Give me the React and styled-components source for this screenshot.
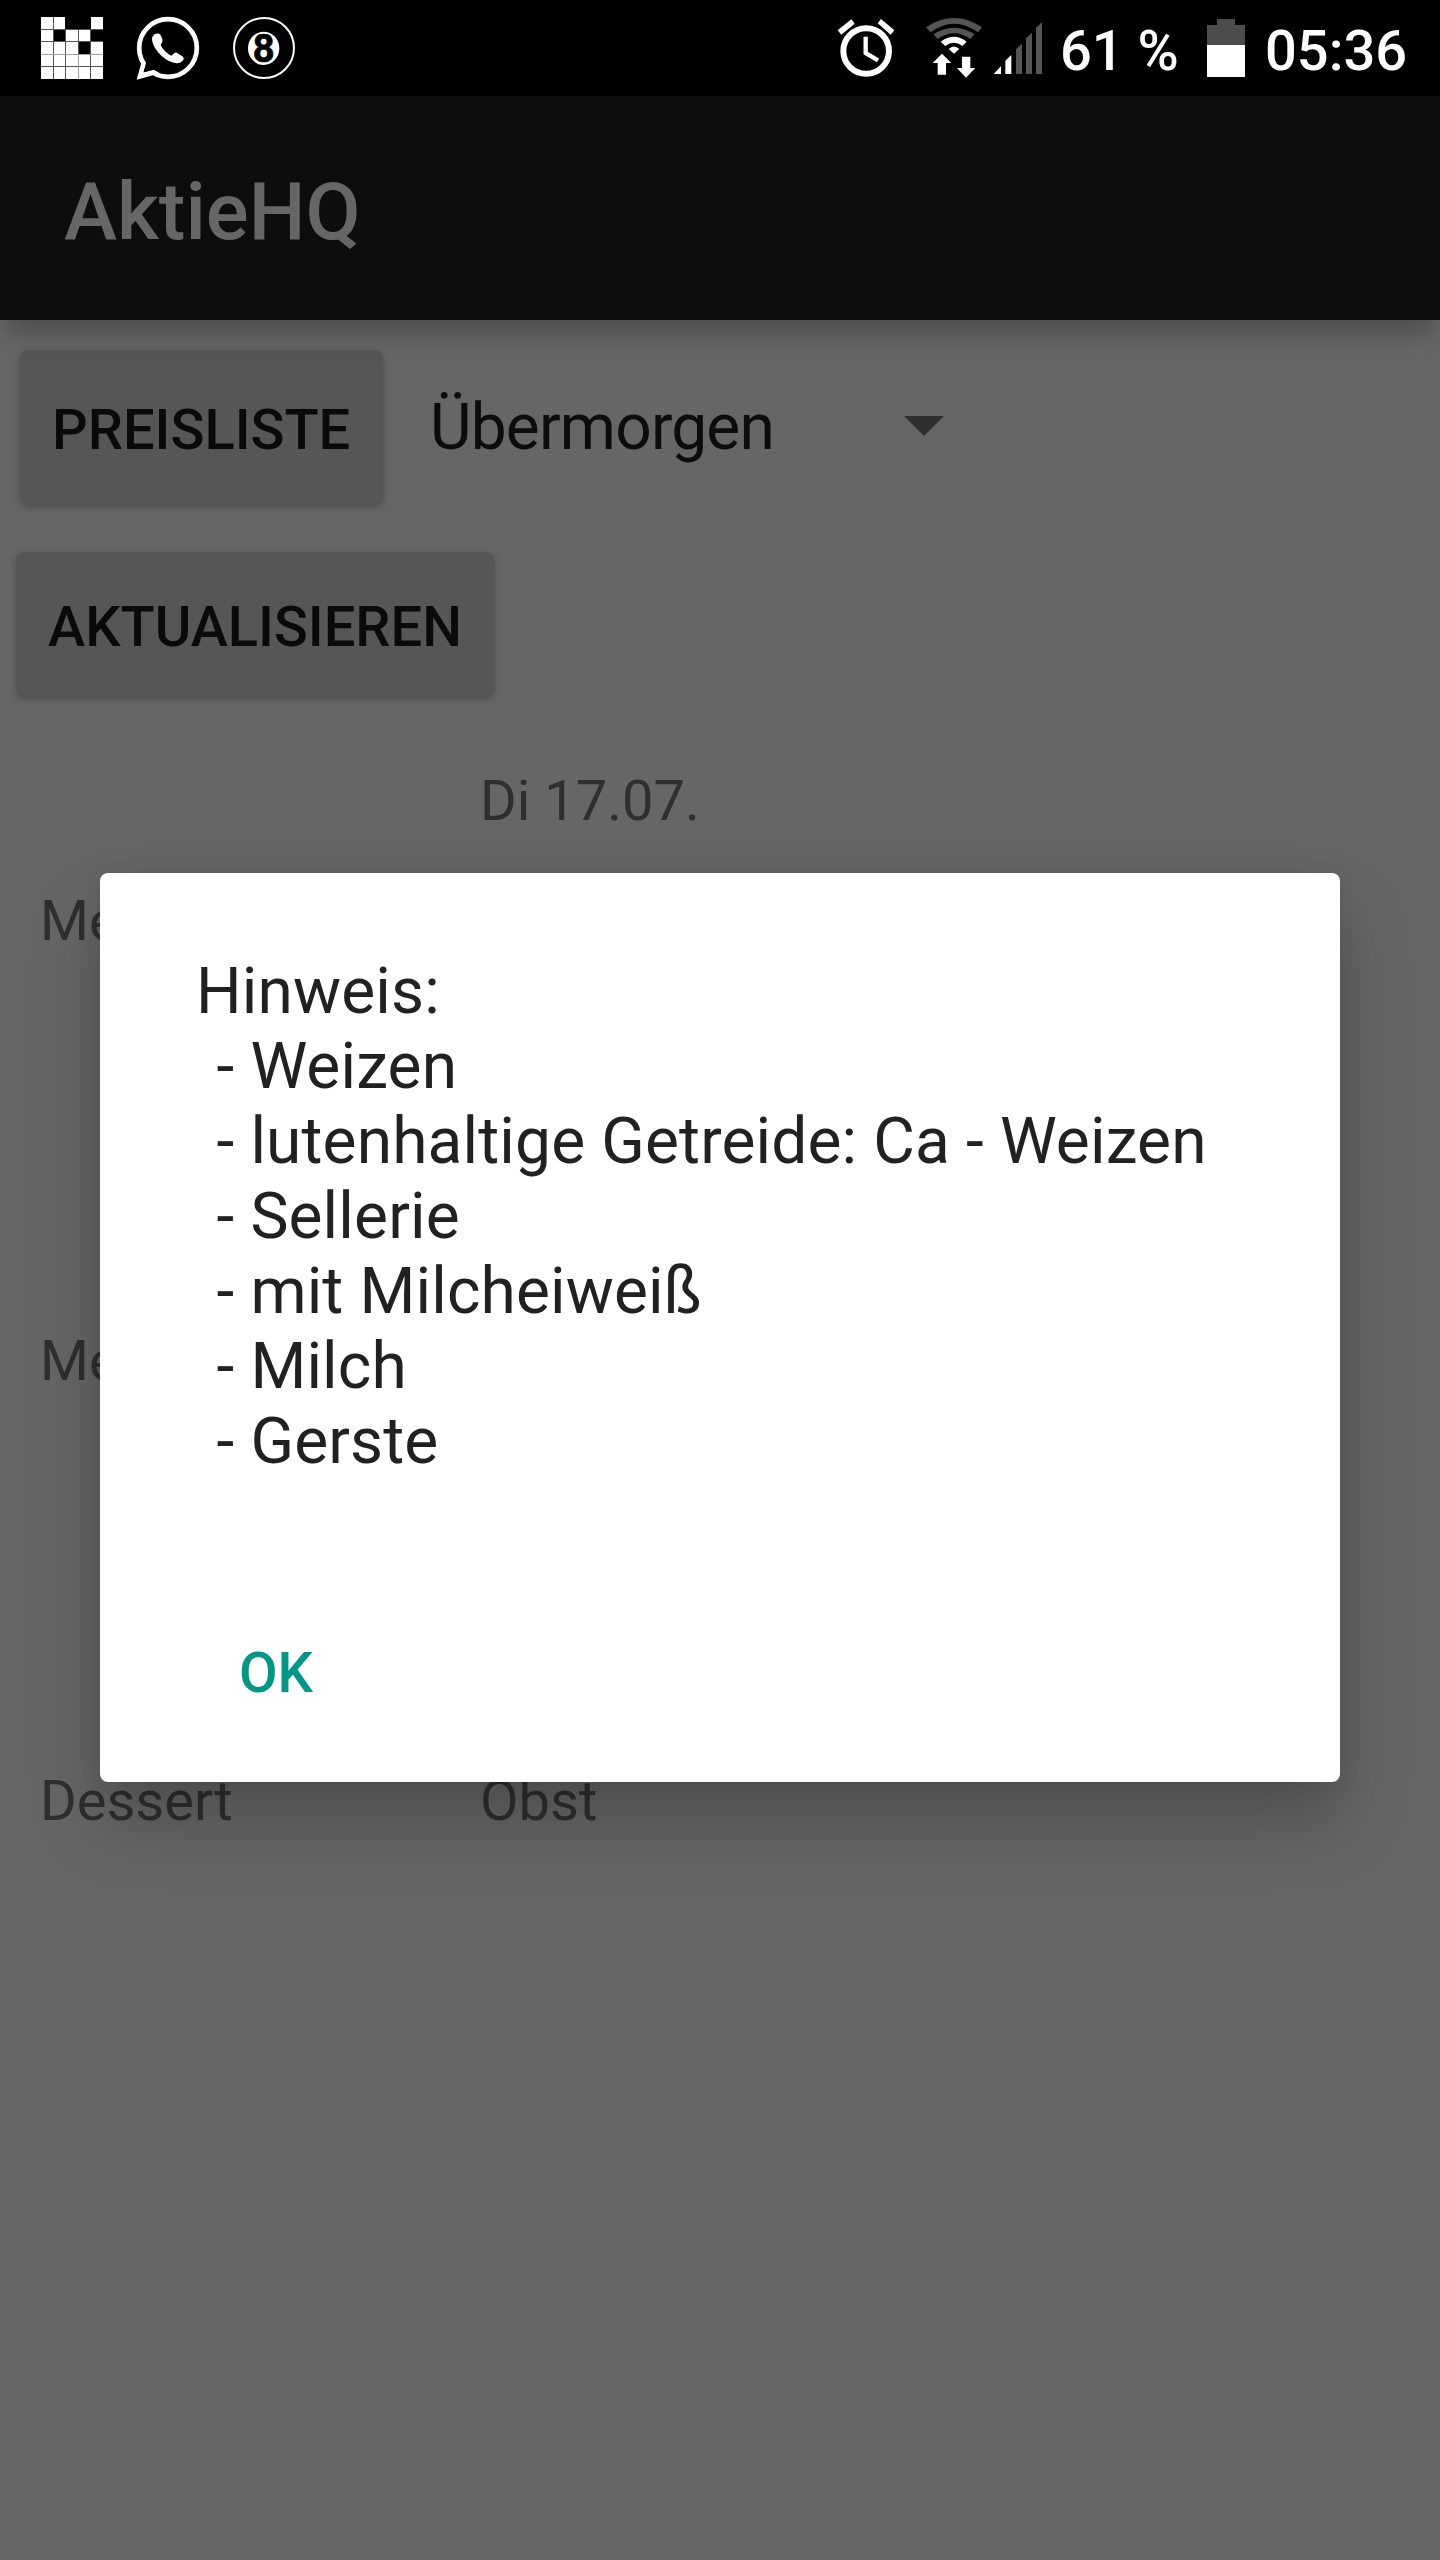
import React from "react";
import styled, { createGlobalStyle } from "styled-components";

const GlobalStyle = createGlobalStyle`
  * { box-sizing: border-box; }
  body { margin: 0; background: #666666; }
`;

const Screen = styled.div`
  position: relative;
  display: flex;
  flex-direction: column;
  width: 1440px;
  height: 2560px;
  overflow: hidden;
  background: #666666;
  font-family: Roboto, "Noto Sans", sans-serif;
  font-size: 56px;
  line-height: 66px;
  color: #0c0c0c;
`;

const StatusBar = styled.header`
  display: flex;
  justify-content: space-between;
  flex: none;
  height: 96px;
  padding: 0 33px 0 41px;
  background: #000000;
  color: #ffffff;
  font-weight: 500;
`;

const StatusGroup = styled.div`
  display: flex;
  align-items: flex-start;
`;

const Glyph = styled.svg`
  display: block;
  flex: none;
  width: ${(p) => p.$w}px;
  height: ${(p) => p.$h}px;
  margin-top: ${(p) => p.$top}px;
  margin-right: ${(p) => p.$gap || 0}px;
`;

const StatusText = styled.span`
  margin-top: 18px;
  width: ${(p) => p.$w}px;
  margin-right: ${(p) => p.$gap || 0}px;
  white-space: nowrap;
`;

const AppBar = styled.div`
  position: relative;
  z-index: 1;
  display: flex;
  flex: none;
  height: 224px;
  padding: 69px 64px 0;
  background: #0d0d0d;
  box-shadow: 0 18px 25px -6px rgba(0, 0, 0, 0.25);
`;

const Title = styled.h1`
  margin: 0;
  color: #666666;
  font-size: 80px;
  font-weight: 500;
  line-height: 94px;
`;

const Toolbar = styled.div`
  display: flex;
  align-items: flex-start;
  flex: none;
  height: ${(p) => p.$height}px;
  padding: ${(p) => p.$pad};
`;

const RaisedButton = styled.button`
  display: flex;
  align-items: flex-start;
  width: ${(p) => p.$w}px;
  height: ${(p) => p.$h}px;
  padding: ${(p) => p.$top}px 0 0 32px;
  border: 0;
  border-radius: 8px;
  background: #565656;
  box-shadow: 0 3px 7px rgba(0, 0, 0, 0.25);
  color: #0a0a0a;
  font: 500 56px/66px Roboto, "Noto Sans", sans-serif;
  text-transform: uppercase;
  white-space: nowrap;
`;

const Select = styled.div`
  display: flex;
  align-items: flex-start;
  justify-content: space-between;
  width: 514px;
  margin: 40px 0 0 47px;
  font-size: 64px;
  line-height: 75px;
  letter-spacing: -0.8px;
`;

const Caret = styled.span`
  width: 40px;
  height: 20px;
  margin-top: 26px;
  background: #2f2f2f;
  clip-path: polygon(0 0, 100% 0, 50% 100%);
`;

const MenuGrid = styled.div`
  display: grid;
  grid-template-columns: 440px 1fr;
  grid-template-rows: 120px 440px 440px 120px;
  padding: 32px 40px 0;
  color: #2f2f2f;
`;

const Overlay = styled.div`
  position: absolute;
  inset: 96px 0 0;
  z-index: 2;
  display: flex;
  justify-content: center;
  align-items: flex-start;
  padding-top: 777px;
`;

const Dialog = styled.section`
  display: flex;
  flex-direction: column;
  align-items: flex-start;
  width: 1240px;
  height: 909px;
  padding: 81px 96px 0;
  border-radius: 8px;
  background: #ffffff;
  box-shadow: 0 40px 72px rgba(0, 0, 0, 0.24), 0 0 24px rgba(0, 0, 0, 0.07);
`;

const MessageLine = styled.p`
  margin: 0;
  padding-left: ${(p) => (p.$item ? 4.5 : 0)}px;
  color: #212121;
  font-size: 64px;
  line-height: 75px;
  letter-spacing: 0.15px;
  white-space: pre;
`;

const TextButton = styled.button`
  margin: 161px 0 0 43px;
  padding: 0;
  border: 0;
  background: none;
  color: #009688;
  font: 500 56px/66px Roboto, "Noto Sans", sans-serif;
`;

const tiles = ["11001", "10110", "11101", "11111", "11111"];
const tileStart = [0, 13, 25, 38, 50];
const tileSize = [12, 11, 12, 11, 12];

function TilesIcon() {
  return (
    <Glyph $w={62} $h={62} $top={17} $gap={33} viewBox="0 0 62 62" shapeRendering="crispEdges">
      <path d="M0 0H24V12H62V62H0Z" fill="#555" />
      <path d="M0 37H62V38H0ZM37 38H38V62H37Z" fill="#a0a0a0" />
      {tiles.map((row, y) =>
        [...row].map((on, x) => (
          <rect
            key={`${x}-${y}`}
            x={tileStart[x]}
            y={tileStart[y]}
            width={tileSize[x]}
            height={tileSize[y]}
            fill={on === "1" ? "#fff" : "#000"}
          />
        ))
      )}
    </Glyph>
  );
}

function ChatIcon() {
  return (
    <Glyph $w={64} $h={64} $top={16} $gap={33} viewBox="348 48 192 192">
      <circle cx="444" cy="144" r="86.500" fill="none" stroke="#fff" strokeWidth="14" />
      <path d="M377 187L371 217L402 209L420 220L404 224L350 239L364 188L362 170Z" fill="#fff" />
      <path d="M379 180L378 189L371 217L402 209L412 214L430 190L400 160Z" fill="#000" />
      <path
        d="M404 102Q396 108 396 120Q400 145 425 168Q448 188 470 190Q484 190 491 178Q492 170 486 168L470 158Q465 156 461 161L454 167Q432 156 422 135L427 125Q429 121 426 115L421 104Q417 98 404 102Z"
        fill="#fff"
      />
    </Glyph>
  );
}

function EightBallIcon() {
  return (
    <Glyph $w={62} $h={62} $top={17} viewBox="639 51 186 186">
      <circle cx="732" cy="144" r="90" fill="none" stroke="#fff" strokeWidth="6" />
      <ellipse cx="731" cy="145" rx="47" ry="50" fill="#fff" />
      <text
        x="731"
        y="186"
        fontSize="114"
        fontWeight="700"
        textAnchor="middle"
        fontFamily="Roboto, sans-serif"
        fill="#000"
        stroke="#000"
        strokeWidth="2"
      >
        8
      </text>
    </Glyph>
  );
}

function AlarmIcon() {
  return (
    <Glyph $w={58} $h={60} $top={18} $gap={30} viewBox="51 54 174 180">
      <circle cx="138.500" cy="153" r="68.500" fill="none" stroke="#fff" strokeWidth="18" />
      <path d="M137 110V159L174 181" fill="none" stroke="#fff" strokeWidth="13" />
      <path d="M53 91L94 58L104 71L64 104ZM183 57L223 91L212 104L173 70Z" fill="#fff" />
    </Glyph>
  );
}

function WifiIcon() {
  return (
    <Glyph $w={58} $h={62} $top={17} $gap={10} viewBox="315 51 174 186">
      <path d="M318 82Q402 26 486 82L474 97Q402 45 332 97Z" fill="#555" />
      <path d="M340 103Q402 63 464 103L451 117Q402 82 353 117Z" fill="#555" />
      <path d="M362 125Q402 95 440 125L427 138Q402 118 376 138Z" fill="#fff" />
      <path d="M386 147Q402 132 418 147L402 161Z" fill="#fff" />
      <path
        d="M366 161L394 189H378V224H353V189H338ZM426 170H451V204H466L438 233L411 204H426Z"
        fill="#fff"
      />
    </Glyph>
  );
}

function SignalIcon() {
  return (
    <Glyph $w={50} $h={54} $top={21} $gap={17} viewBox="519 63 150 162">
      <path d="M521 222L543 198V222ZM556 222V182L574 165V222Z" fill="#fff" />
      <path
        d="M588 222V148L606 131V222ZM618 222V115L636 98V222ZM648 222V83L666 66V222Z"
        fill="#555"
      />
    </Glyph>
  );
}

function BatteryIcon() {
  return (
    <Glyph $w={38} $h={58} $top={19} $gap={20} viewBox="0 0 38 58">
      <path d="M0 6H10V0H28V6H38V26H0Z" fill="#4c4c4c" />
      <rect y="26" width="38" height="32" fill="#fff" />
    </Glyph>
  );
}

const hints = [
  "Weizen",
  "lutenhaltige Getreide: Ca - Weizen",
  "Sellerie",
  "mit Milcheiweiß",
  "Milch",
  "Gerste",
];

const rows = [
  ["", "Di 17.07."],
  ["Menü", ""],
  ["Menü", ""],
  ["Dessert", "Obst"],
];

export default function App() {
  return (
    <Screen>
      <GlobalStyle />
      <StatusBar>
        <StatusGroup>
          <TilesIcon />
          <ChatIcon />
          <EightBallIcon />
        </StatusGroup>
        <StatusGroup>
          <AlarmIcon />
          <WifiIcon />
          <SignalIcon />
          <StatusText $w={119} $gap={28}>61 %</StatusText>
          <BatteryIcon />
          <StatusText $w={142}>05:36</StatusText>
        </StatusGroup>
      </StatusBar>
      <AppBar>
        <Title>AktieHQ</Title>
      </AppBar>
      <Toolbar $height={232} $pad="30px 0 0 20px">
        <RaisedButton $w={363} $h={154} $top={47}>Preisliste</RaisedButton>
        <Select>
          Übermorgen
          <Caret />
        </Select>
      </Toolbar>
      <Toolbar $height={184} $pad="0 0 0 16px">
        <RaisedButton $w={478} $h={144} $top={42}>Aktualisieren</RaisedButton>
      </Toolbar>
      <MenuGrid>
        {rows.map(([name, dish], i) => (
          <React.Fragment key={i}>
            <span>{name}</span>
            <span>{dish}</span>
          </React.Fragment>
        ))}
      </MenuGrid>
      <Overlay>
        <Dialog role="dialog">
          <MessageLine>Hinweis:</MessageLine>
          {hints.map((hint) => (
            <MessageLine key={hint} $item>{` - ${hint}`}</MessageLine>
          ))}
          <TextButton>OK</TextButton>
        </Dialog>
      </Overlay>
    </Screen>
  );
}
